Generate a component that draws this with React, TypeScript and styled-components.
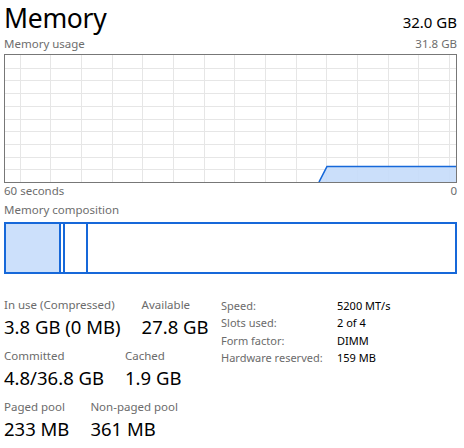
import React from "react";
import styled, { createGlobalStyle } from "styled-components";

const Global = createGlobalStyle`
  html, body { margin: 0; padding: 0; background: #ffffff; }
  body { font-family: "Noto Sans", "Open Sans", sans-serif; color: #000; }
`;

const Page = styled.div`
  width: 464px;
  height: 448px;
  box-sizing: border-box;
  padding: 2px 7px 0 4px;
  overflow: hidden;
  display: flex;
  flex-direction: column;
`;

const Header = styled.div`
  display: flex;
  justify-content: space-between;
  align-items: baseline;
  height: 32px;
`;

const Title = styled.div`
  font-size: 26.5px;
  line-height: 32px;
  letter-spacing: -0.3px;
`;

const Total = styled.div`
  font-size: 15px;
  line-height: 32px;
`;

const Caption = styled.div<{ $mt?: number }>`
  display: flex;
  justify-content: space-between;
  font-size: 11.5px;
  line-height: 16px;
  color: #6d6d6d;
  margin-top: ${(p) => p.$mt ?? 0}px;
`;

const ChartBox = styled.div`
  margin-top: 2px;
  height: 129px;
  box-sizing: border-box;
  border: 1px solid #777777;
  svg { display: block; }
`;

const CompBar = styled.div`
  margin-top: 4px;
  height: 52px;
  box-sizing: border-box;
  border: 2px solid #1668d9;
  display: flex;
`;

const Segment = styled.div<{ $w?: number; $fill?: boolean; $last?: boolean }>`
  flex: ${(p) => (p.$last ? "1 1 auto" : `0 0 ${p.$w}px`)};
  background: ${(p) => (p.$fill ? "#cce0fb" : "transparent")};
  border-right: ${(p) => (p.$last ? "none" : "2px solid #1668d9")};
`;

const Stats = styled.div`
  margin-top: 23px;
  display: flex;
`;

const LeftStats = styled.div`
  width: 217px;
  display: flex;
  flex-direction: column;
  gap: 7px;
`;

const StatRow = styled.div`
  display: flex;
  gap: 21px;
`;

const Stat = styled.div`
  display: flex;
  flex-direction: column;
`;

const StatLabel = styled.div`
  font-size: 11.5px;
  line-height: 16px;
  color: #6b6b6b;
  white-space: nowrap;
`;

const StatValue = styled.div`
  font-size: 18.5px;
  line-height: 28px;
  white-space: nowrap;
`;

const Details = styled.div`
  display: grid;
  grid-template-columns: 116px auto;
  grid-auto-rows: 17.6px;
  margin-top: -0.5px;
  font-size: 11px;
  line-height: 17.6px;
`;

const DLabel = styled.div`
  color: #6b6b6b;
  white-space: nowrap;
`;

const DValue = styled.div`
  color: #000;
  white-space: nowrap;
`;

const W = 451;
const H = 127;

function UsageChart() {
  const vLines: number[] = [];
  for (let x = 14.5; x < W; x += 30.68) vLines.push(x);
  const hLines: number[] = [];
  for (let i = 1; i < 10; i++) hLines.push(i * 12.7);
  return (
    <svg width={W} height={H} viewBox={`0 0 ${W} ${H}`}>
      {vLines.map((x) => (
        <line key={`v${x}`} x1={Math.round(x) + 0.5} x2={Math.round(x) + 0.5} y1={0} y2={H} stroke="#e6e6e6" strokeWidth={1} />
      ))}
      {hLines.map((y) => (
        <line key={`h${y}`} x1={0} x2={W} y1={Math.round(y) + 0.5} y2={Math.round(y) + 0.5} stroke="#e6e6e6" strokeWidth={1} />
      ))}
      <polygon points={`314,${H} 322,111 ${W},111 ${W},${H}`} fill="#c5dcfa" fillOpacity={0.9} />
      <polyline points={`314,${H} 322,111.5 ${W},111.5`} fill="none" stroke="#1668d9" strokeWidth={1.6} />
    </svg>
  );
}

const leftStats: { label: string; value: string }[][] = [
  [
    { label: "In use (Compressed)", value: "3.8 GB (0 MB)" },
    { label: "Available", value: "27.8 GB" },
  ],
  [
    { label: "Committed", value: "4.8/36.8 GB" },
    { label: "Cached", value: "1.9 GB" },
  ],
  [
    { label: "Paged pool", value: "233 MB" },
    { label: "Non-paged pool", value: "361 MB" },
  ],
];

const details: [string, string][] = [
  ["Speed:", "5200 MT/s"],
  ["Slots used:", "2 of 4"],
  ["Form factor:", "DIMM"],
  ["Hardware reserved:", "159 MB"],
];

export default function App() {
  return (
    <>
      <Global />
      <Page>
        <Header>
          <Title>Memory</Title>
          <Total>32.0 GB</Total>
        </Header>
        <Caption $mt={2}>
          <span>Memory usage</span>
          <span>31.8 GB</span>
        </Caption>
        <ChartBox>
          <UsageChart />
        </ChartBox>
        <Caption>
          <span>60 seconds</span>
          <span>0</span>
        </Caption>
        <Caption $mt={3}>
          <span>Memory composition</span>
        </Caption>
        <CompBar>
          <Segment $w={53} $fill />
          <Segment $w={2} />
          <Segment $w={21} />
          <Segment $last />
        </CompBar>
        <Stats>
          <LeftStats>
            {leftStats.map((row, i) => (
              <StatRow key={i}>
                {row.map((s) => (
                  <Stat key={s.label}>
                    <StatLabel>{s.label}</StatLabel>
                    <StatValue>{s.value}</StatValue>
                  </Stat>
                ))}
              </StatRow>
            ))}
          </LeftStats>
          <Details>
            {details.map(([l, v]) => (
              <React.Fragment key={l}>
                <DLabel>{l}</DLabel>
                <DValue>{v}</DValue>
              </React.Fragment>
            ))}
          </Details>
        </Stats>
      </Page>
    </>
  );
}
